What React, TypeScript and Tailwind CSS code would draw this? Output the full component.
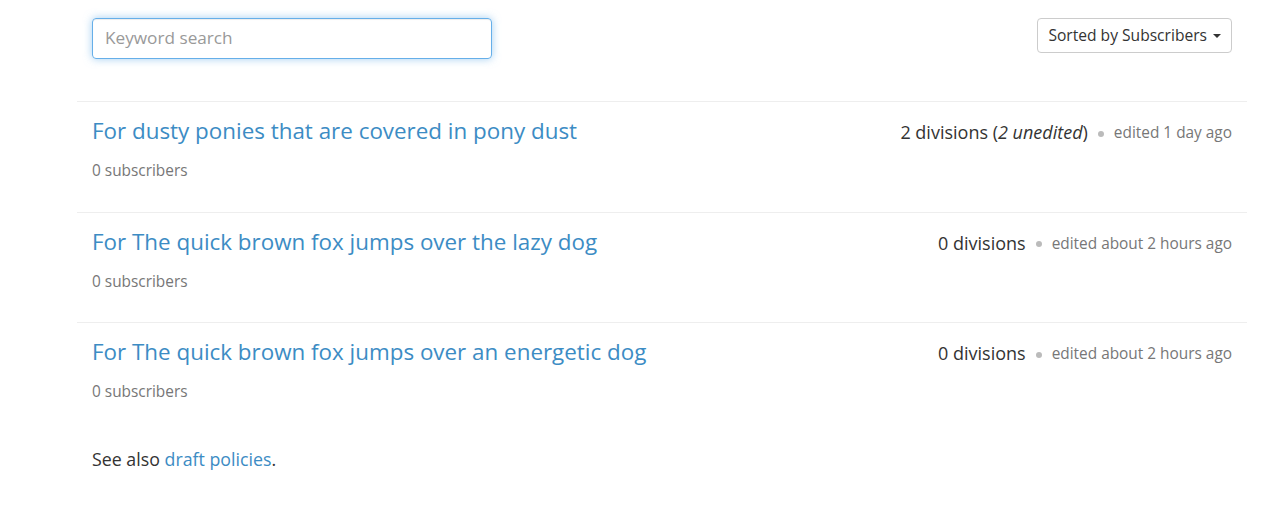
const policies = [
  {
    title: "For dusty ponies that are covered in pony dust",
    divisions: 2,
    unedited: 2,
    edited: "edited 1 day ago",
  },
  {
    title: "For The quick brown fox jumps over the lazy dog",
    divisions: 0,
    unedited: 0,
    edited: "edited about 2 hours ago",
  },
  {
    title: "For The quick brown fox jumps over an energetic dog",
    divisions: 0,
    unedited: 0,
    edited: "edited about 2 hours ago",
  },
]

export default function App() {
  return (
    <main className="min-h-screen bg-white font-['Open_Sans',sans-serif] text-[#333]">
      <div className="ml-[77px] w-[1170px]">

        {/* Search + sort */}
        <div className="flex items-start justify-between px-[15px] pt-[18px]">
          <input
            className="h-[41px] w-[400px] rounded-[4px] border border-[#66afe9] px-3 pb-[2px] text-[17.2px] text-[#555] outline-none shadow-[inset_0_1px_1px_rgba(0,0,0,0.075),0_0_8px_rgba(102,175,233,0.6)] placeholder:text-[#999]"
            placeholder="Keyword search"
          />
          <button className="flex h-[35px] items-center gap-[6px] rounded-[4px] border border-[#ccc] bg-white pl-[10px] pr-[10px] text-[15.6px] text-[#333]">
            Sorted by Subscribers
            <span className="h-0 w-0 border-x-4 border-t-4 border-x-transparent border-t-[#333]" />
          </button>
        </div>

        {/* Policy list */}
        <ul className="mt-[42px]">
          {policies.map((p) => (
            <li key={p.title} className="border-t border-[#eee] px-[15px] pb-[28.5px] pt-[16px]">
              <div className="flex h-[26px] items-baseline justify-between">
                <a href="#" className="text-[22.4px] leading-[26px] text-[#3c8cc4]">
                  {p.title}
                </a>
                <div className="flex items-center gap-[10px] text-[#333]">
                  <span className="text-[18px] leading-[26px]">
                    {p.divisions} divisions
                    {p.unedited > 0 && <span> (<em>{p.unedited} unedited</em>)</span>}
                  </span>
                  <span className="mt-[3px] inline-block h-[6px] w-[6px] rounded-full bg-[#bbb]" />
                  <span className="mt-[2px] text-[15.4px] leading-[26px] text-[#777]">{p.edited}</span>
                </div>
              </div>
              <p className="mt-[15px] text-[15.4px] leading-[24px] text-[#777]">0 subscribers</p>
            </li>
          ))}
        </ul>

        <p className="mt-[14.5px] px-[15px] text-[17.8px] leading-[24px]">
          See also <a href="#" className="text-[#3c8cc4]">draft policies</a>.
        </p>

      </div>
    </main>
  )
}
